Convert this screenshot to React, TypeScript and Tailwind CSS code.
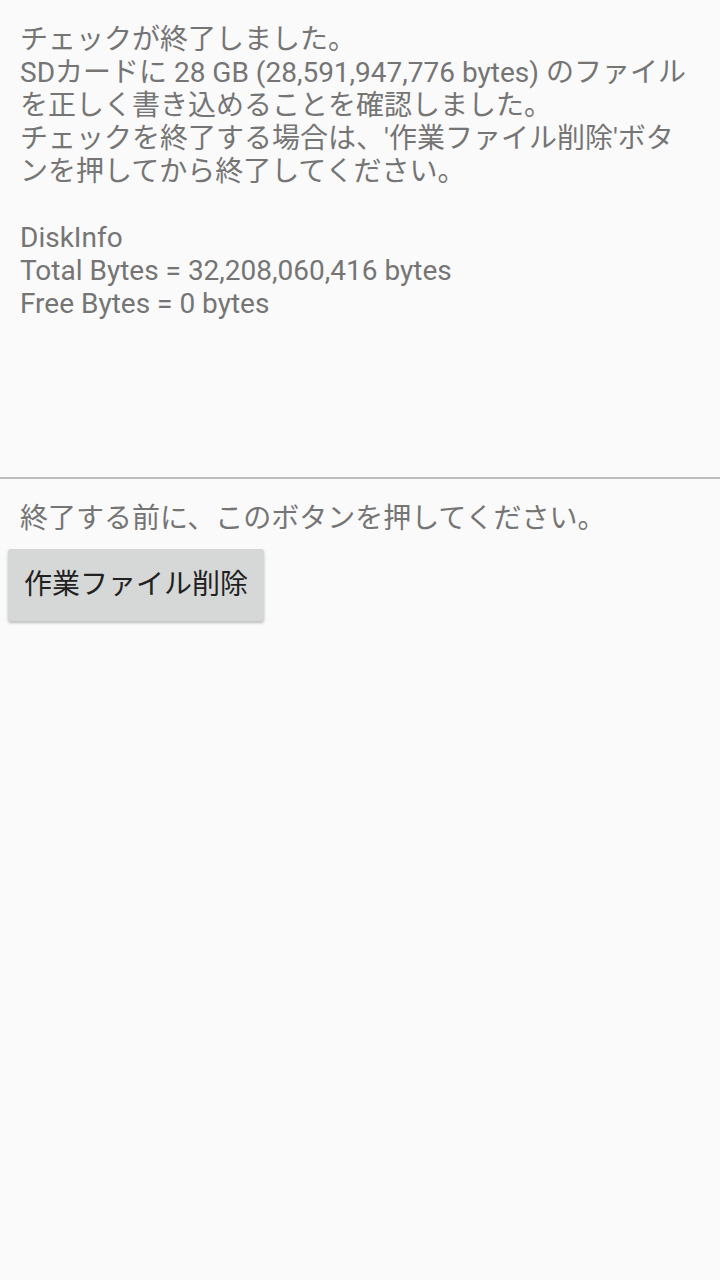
import React from 'react';

const lines = [
  'チェックが終了しました。',
  'SDカードに 28 GB (28,591,947,776 bytes) のファイル',
  'を正しく書き込めることを確認しました。',
  "チェックを終了する場合は、'作業ファイル削除'ボタ",
  'ンを押してから終了してください。',
  '\u00a0',
  'DiskInfo',
  'Total Bytes = 32,208,060,416 bytes',
  'Free Bytes = 0 bytes',
];

export default function App() {
  return (
    <div className="w-[720px] h-[1280px] bg-[#fafafa] font-['Roboto','Noto_Sans_CJK_JP',sans-serif] overflow-hidden">
      <div className="h-[477px] px-5 pt-[23px] text-[28px] leading-[33px] text-[#757575] whitespace-nowrap">
        {lines.map((l, i) => (
          <div key={i}>{l}</div>
        ))}
      </div>
      <div className="h-[2px] bg-[#bdbdbd]" />
      <div className="px-5 pt-[23px] text-[28px] leading-[33px] text-[#757575]">
        終了する前に、このボタンを押してください。
      </div>
      <div className="pl-2 pt-[14px]">
        <button className="w-[256px] h-[72px] rounded-[3px] bg-[#d6d7d7] shadow-[0_2px_3px_rgba(0,0,0,0.25)] text-[28px] text-[#212121] flex items-center justify-center">
          作業ファイル削除
        </button>
      </div>
    </div>
  );
}
